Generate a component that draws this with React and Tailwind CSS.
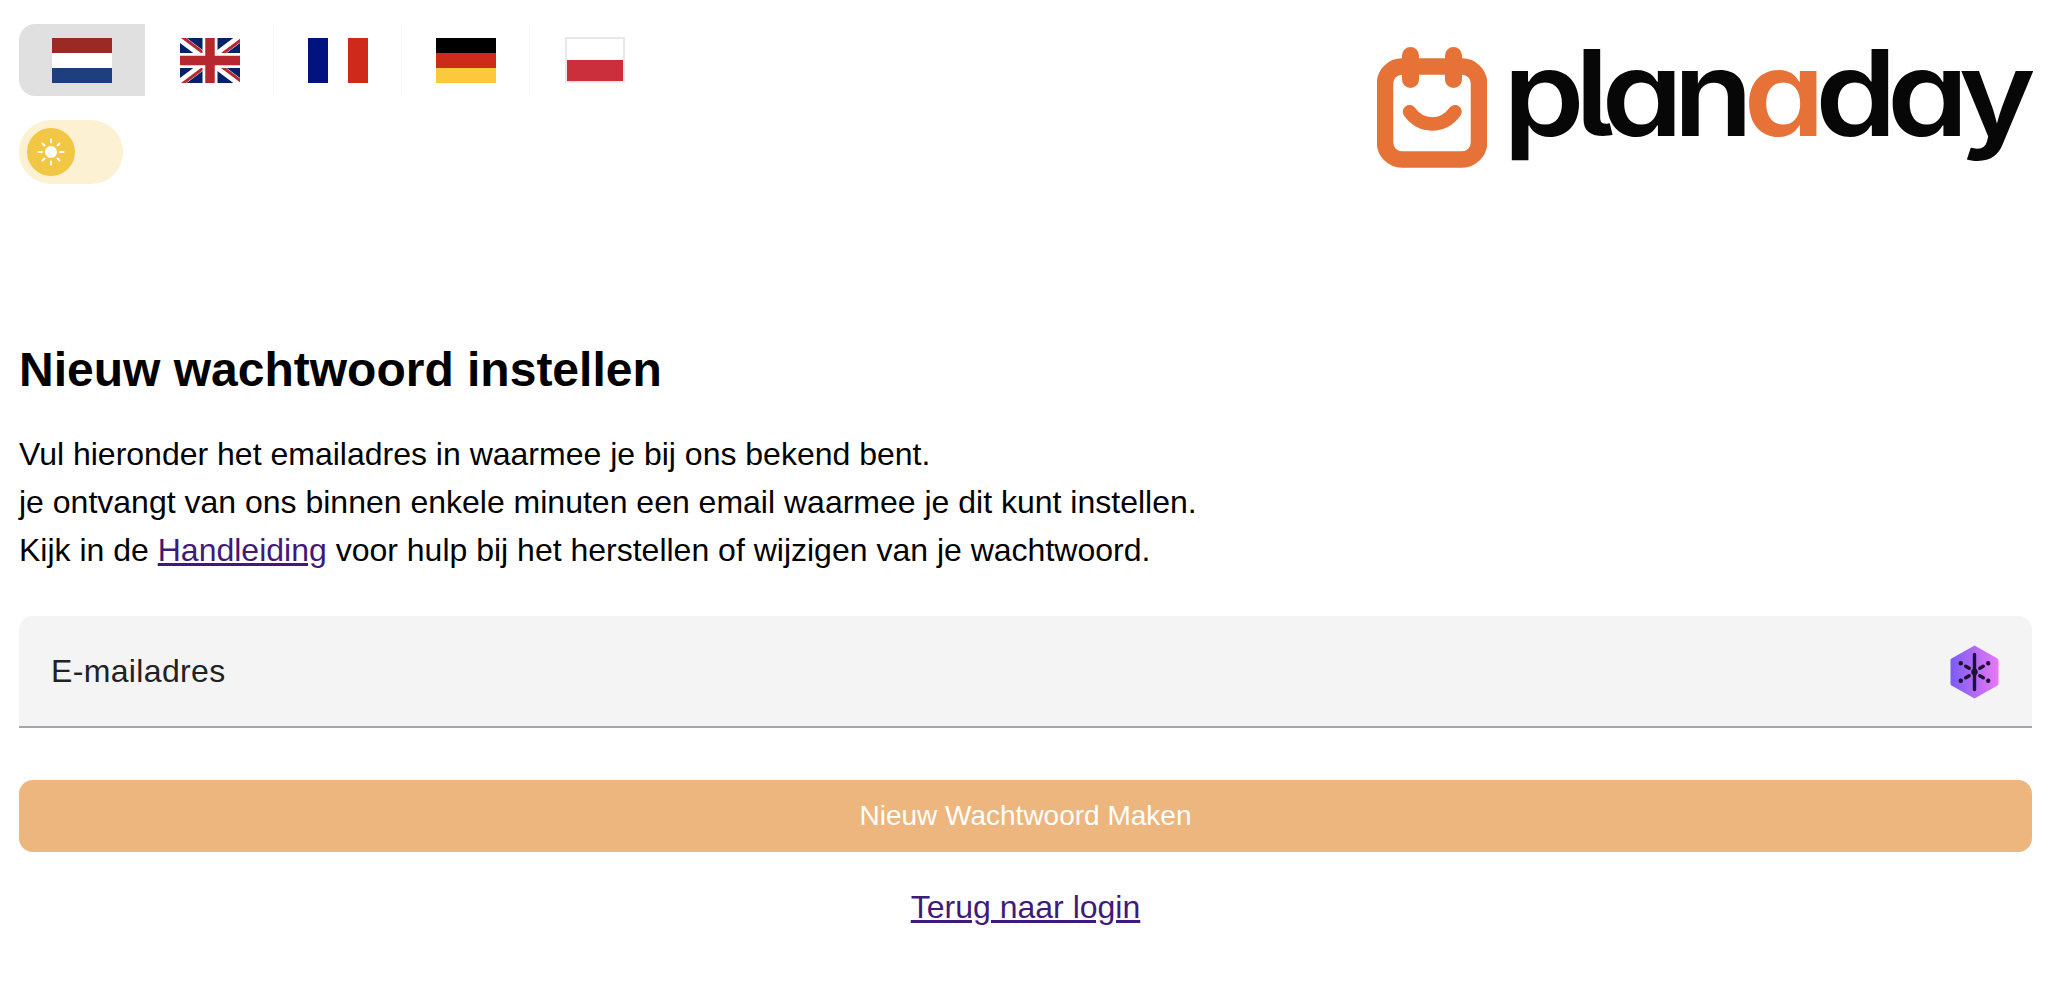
const font = "[font-family:'Liberation_Sans',Arial,sans-serif]";

function Nl() {
  return (
    <svg width="60" height="45" viewBox="0 0 3 3" preserveAspectRatio="none" className="block">
      <rect width="3" height="1" fill="#9b2a25" />
      <rect y="1" width="3" height="1" fill="#ffffff" />
      <rect y="2" width="3" height="1" fill="#1d3f7e" />
    </svg>
  );
}
function Uk() {
  return (
    <svg width="60" height="45" viewBox="0 0 60 45" className="block">
      <rect width="60" height="45" fill="#012169" />
      <path d="M0 0L60 45M60 0L0 45" stroke="#fff" strokeWidth="8" />
      <path d="M0 0L30 22.5M60 45L30 22.5" stroke="#b7282e" strokeWidth="3" transform="translate(1.5 -1.5)" />
      <path d="M60 0L30 22.5M0 45L30 22.5" stroke="#b7282e" strokeWidth="3" transform="translate(1.5 1.5)" />
      <path d="M30 0V45M0 22.5H60" stroke="#fff" strokeWidth="15" />
      <path d="M30 0V45M0 22.5H60" stroke="#b7282e" strokeWidth="9.5" />
    </svg>
  );
}
function Fr() {
  return (
    <svg width="60" height="45" viewBox="0 0 3 3" preserveAspectRatio="none" className="block">
      <rect width="1" height="3" fill="#00137f" />
      <rect x="1" width="1" height="3" fill="#ffffff" />
      <rect x="2" width="1" height="3" fill="#cf291c" />
    </svg>
  );
}
function De() {
  return (
    <svg width="60" height="45" viewBox="0 0 3 3" preserveAspectRatio="none" className="block">
      <rect width="3" height="1" fill="#000000" />
      <rect y="1" width="3" height="1" fill="#cb2b18" />
      <rect y="2" width="3" height="1" fill="#fcc93c" />
    </svg>
  );
}
function Pl() {
  return (
    <div className="ml-[2px] mt-[-1px] flex h-[46px] w-[60px] flex-col border-2 border-[#e5e7eb]">
      <div className="flex-1 bg-white" />
      <div className="h-[21px] bg-[#cb2f3c]" />
    </div>
  );
}

function FlagItem({ children, active, divider, width }) {
  return (
    <div
      className={
        "flex h-[72px] shrink-0 items-center justify-center " +
        (width === "first" ? "w-[126px] " : width === "second" ? "ml-[1px] w-[128px] " : "w-[128px] ") +
        (active ? "rounded-l-[16px] bg-[#e0e0e0] " : "") +
        (divider ? "border-r border-[#f7f7f7]" : "")
      }
    >
      {children}
    </div>
  );
}

function Sun() {
  return (
    <svg width="28" height="28" viewBox="0 0 28 28" fill="none" stroke="#fff" strokeWidth="2" strokeLinecap="round">
      <circle cx="14" cy="14" r="6" fill="#fff" stroke="none" />
      <path d="M14 1.5V4.5M14 23.5V26.5M1.5 14H5M23 14H26.5M5.5 5.5L7.5 7.5M20.5 20.5L22.5 22.5M22.5 5.5L20.5 7.5M7.5 20.5L5.5 22.5" />
    </svg>
  );
}

function Logo() {
  return (
    <div className="flex items-start">
      <svg width="110" height="121" viewBox="0 0 110 121" className="block shrink-0" fill="none">
        <rect x="8" y="19.5" width="94" height="93" rx="17" stroke="#e67238" strokeWidth="16.5" />
        <path d="M33.5 8.5V32.5M76.5 8.5V32.5" stroke="#e67238" strokeWidth="17" strokeLinecap="round" />
        <path d="M32.5 64.7C44 81 66 81 78 64.7" stroke="#e67238" strokeWidth="13.5" strokeLinecap="round" />
      </svg>
      <div className="relative ml-[16px] h-[121px] w-[529px]">
        <span className="absolute left-0 top-[-26px] origin-left scale-x-[1.1] whitespace-nowrap text-[119px] leading-[144px] font-semibold tracking-[-9px] text-[#070707] [font-family:Inter,sans-serif] [font-feature-settings:'cv11','ss02']">
          plan<span className="text-[#e67238]">a</span>day
        </span>
      </div>
    </div>
  );
}

function Hex() {
  return (
    <svg width="49" height="54" viewBox="0 0 49 54" className="block">
      <defs>
        <linearGradient id="hexg" x1="0" y1="0" x2="1" y2="0">
          <stop offset="0" stopColor="#7a5cf5" />
          <stop offset="1" stopColor="#e878f5" />
        </linearGradient>
      </defs>
      <path d="M24.5 0.5L47.5 13.5A2 2 0 0 1 48.5 15.5V38.5A2 2 0 0 1 47.5 40.5L24.5 53.5L1.5 40.5A2 2 0 0 1 0.5 38.5V15.5A2 2 0 0 1 1.5 13.5Z" fill="url(#hexg)" />
      <g stroke="#1d1330" strokeLinecap="round" fill="none" strokeWidth="3.4">
        <path d="M24.5 9.5V44.5" />
        <path d="M10.8 18.3V18.3M38.2 18.3V18.3M10.8 35.7V35.7M38.2 35.7V35.7" strokeWidth="4.4" />
        <path d="M15.7 21.2L19.2 23.3M33.3 21.2L29.8 23.3M15.7 32.8L19.2 30.7M33.3 32.8L29.8 30.7" />
      </g>
      <circle cx="24.5" cy="27" r="3.2" fill="#1d1330" />
    </svg>
  );
}

export default function App() {
  return (
    <div className={"min-h-[1006px] bg-white pl-[19px] pr-[20px] pt-[24px] text-black " + font}>
      <header className="flex items-start justify-between">
        <div className="shrink-0">
          <div className="flex">
            <FlagItem active width="first"><Nl /></FlagItem>
            <FlagItem divider width="second"><Uk /></FlagItem>
            <FlagItem divider><Fr /></FlagItem>
            <FlagItem divider><De /></FlagItem>
            <FlagItem><Pl /></FlagItem>
          </div>
          <div className="mt-[24px] flex h-[64px] w-[104px] items-center rounded-[32px] bg-[#fdf1d3] pl-[8px]">
            <div className="flex h-[48px] w-[48px] items-center justify-center rounded-full bg-[#f2c744]">
              <Sun />
            </div>
          </div>
        </div>
        <div className="mt-[23px]">
          <Logo />
        </div>
      </header>

      <h1 className="mt-[158px] text-[48px] leading-[56px] font-bold">Nieuw wachtwoord instellen</h1>
      <p className="mt-[32px] text-[32px] leading-[48px]">
        Vul hieronder het emailadres in waarmee je bij ons bekend bent.
        <br />
        je ontvangt van ons binnen enkele minuten een email waarmee je dit kunt instellen.
        <br />
        Kijk in de <a href="#" className="text-[#3f1a78] underline">Handleiding</a> voor hulp bij het herstellen of wijzigen van je wachtwoord.
      </p>

      <div className="relative mt-[42px]">
        <input
          placeholder="E-mailadres"
          className="block h-[112px] w-full rounded-t-[14px] border-b-2 border-[#a5a5ad] bg-[#f4f4f4] pl-[32px] pr-[80px] text-[32px] tracking-[0.35px] text-[#222] outline-none placeholder:text-[#222]"
        />
        <div className="absolute right-[33px] top-[29px]">
          <Hex />
        </div>
      </div>

      <button className="mt-[52px] flex h-[72px] w-full items-center justify-center rounded-[14px] bg-[#ecb67e] text-[28px] text-white">
        Nieuw Wachtwoord Maken
      </button>

      <div className="mt-[35px] text-center">
        <a href="#" className="text-[32px] leading-[40px] text-[#3f1a78] underline">Terug naar login</a>
      </div>
    </div>
  );
}
